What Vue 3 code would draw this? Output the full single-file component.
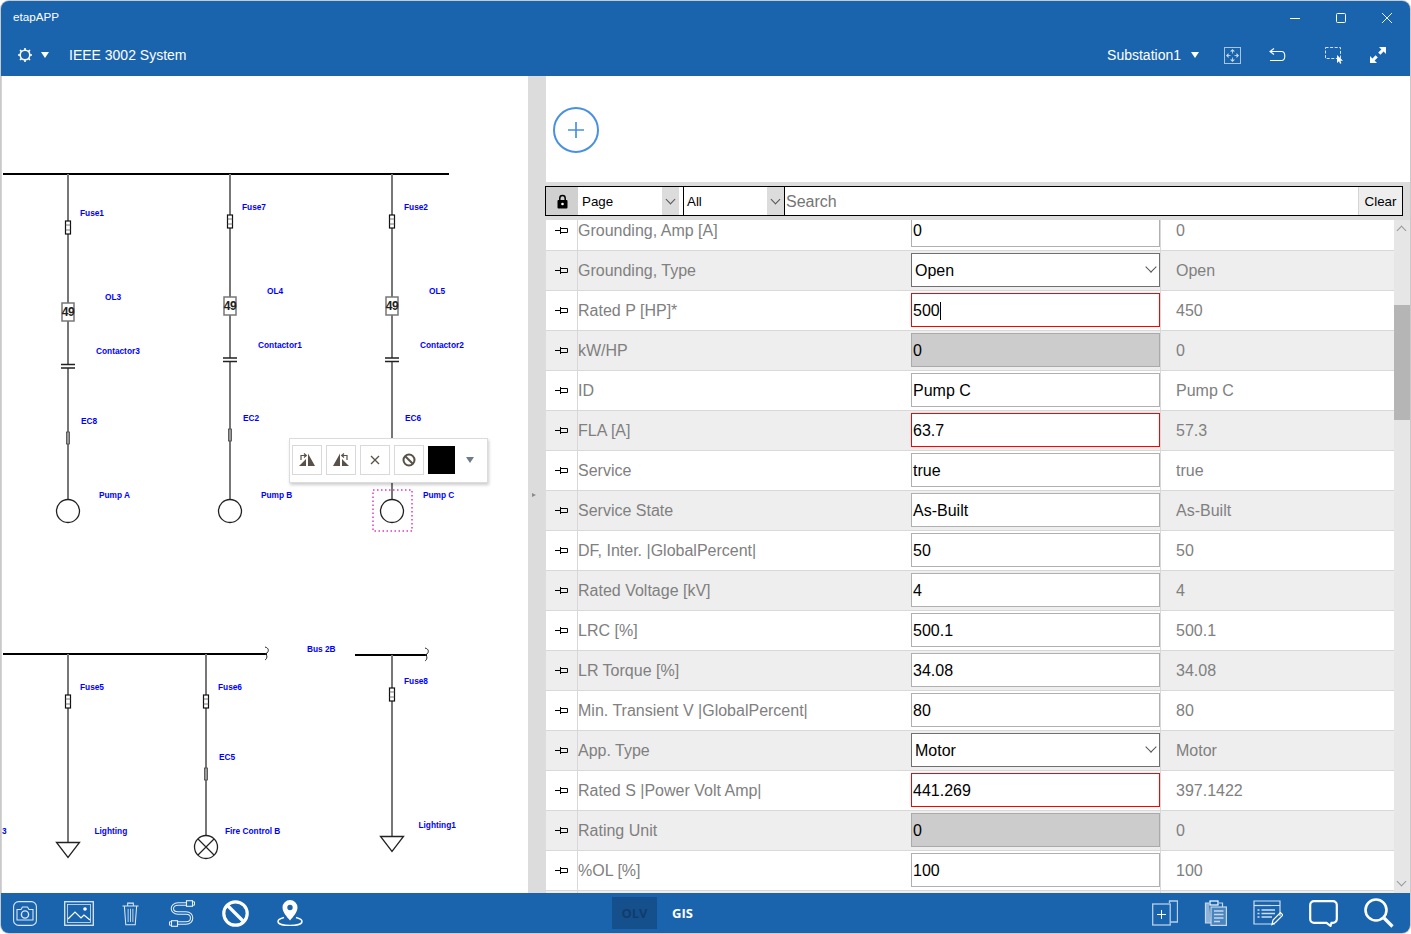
<template>
  <div class="window">
    <header class="topbar">
      <div class="titlebar">
        <span class="app-name">etapAPP</span>
        <div class="win-controls">
          <span class="win-btn">
            <svg width="12" height="12" viewBox="0 0 12 12"><path d="M1 6.5h10" stroke="#fff" fill="none" /></svg>
          </span>
          <span class="win-btn">
            <svg width="12" height="12" viewBox="0 0 12 12"><rect x="1.5" y="1.5" width="9" height="9" rx="1" stroke="#fff" fill="none" /></svg>
          </span>
          <span class="win-btn">
            <svg width="12" height="12" viewBox="0 0 12 12"><path d="M1 1l10 10M11 1L1 11" stroke="#fff" fill="none" stroke-width=".9" /></svg>
          </span>
        </div>
      </div>
      <div class="toolbar">
        <svg class="gear" width="16" height="16" viewBox="0 0 16 16">
          <circle cx="8" cy="8" r="4.8" stroke="#fff" stroke-width="1.6" fill="none" />
          <path d="M8 1v2.2M8 12.8V15M1 8h2.2M12.8 8H15M3 3l1.6 1.6M11.4 11.4L13 13M3 13l1.6-1.6M11.4 4.600L13 3" stroke="#fff" stroke-width="1.6" />
        </svg>
        <span class="caret caret-gear"></span>
        <span class="system-name">IEEE 3002 System</span>
        <span class="substation">Substation1</span>
        <span class="caret caret-sub"></span>
        <svg class="tool-fit" width="17" height="17" viewBox="0 0 17 17" fill="none">
          <rect x=".5" y=".5" width="16" height="16" stroke="#a9c4e0" />
          <path d="M8.5 4v2.500M8.500 10.500V13M4 8.500h2.500M10.500 8.500H13" stroke="#a9c4e0" />
          <path d="M8.500 2l2.500 2.500H6zM8.500 15L11 12.500H6zM2 8.500L4.500 6v5zM15 8.500L12.500 6v5z" fill="#c9dbed" />
        </svg>
        <svg class="tool-undo" width="17" height="16" viewBox="0 0 17 16" fill="none" stroke="#fff" stroke-width="1.1">
          <path d="M5 1.500L1 4.500l4 3" />
          <path d="M1 4.500h11.500c4.400 0 4.400 9 0 9H1" />
        </svg>
        <svg class="tool-select" width="18" height="17" viewBox="0 0 18 17" fill="none">
          <rect x=".5" y=".5" width="15" height="11" stroke="#cfe0f1" stroke-dasharray="3 1.600" />
          <path d="M12 8v8l2-1.800 1 2.600 1.400-.6-1-2.400H18z" fill="#fff" />
        </svg>
        <svg class="tool-expand" width="16" height="16" viewBox="0 0 16 16" fill="#fff">
          <path d="M9 0h7v7l-2.400-2.400-3.200 3.200-2.200-2.200 3.200-3.200zM7 16H0V9l2.400 2.400 3.200-3.200 2.200 2.200-3.200 3.200z" />
        </svg>
      </div>
    </header>

    <main class="content">
      <section class="diagram">
        <svg class="oneline" width="526" height="817" viewBox="2 76 526 817">
          <!-- buses -->
          <path d="M3 174h446M3 654h264M355 655h72" stroke="#000" stroke-width="2.2" fill="none" />
          <path d="M265 647c4 1 4 4 2 6l-2 1c3 1 2 5 0 6M425 648c4 1 4 4 2 6l-2 1c3 1 2 5 0 6" stroke="#222" fill="none" />

          <!-- feeders -->
          <path v-for="l in feeders" :key="l" :d="l" stroke="#777" stroke-width="2" fill="none" />

          <g v-for="f in fuses" :key="f.x + '-' + f.y">
            <rect :x="f.x - 2.5" :y="f.y - 7" width="5" height="13" fill="#fff" stroke="#111" stroke-width="1.2" />
            <path :d="`M${f.x - 2.5} ${f.y - 3}h5M${f.x - 2.5} ${f.y + 2}h5`" stroke="#555" stroke-width=".8" />
          </g>

          <g v-for="b in relays" :key="b.x">
            <rect :x="b.x - 6" :y="b.y - 9" width="12" height="18" fill="#fff" stroke="#777" stroke-width="1.5" />
            <text :x="b.x" :y="b.y + 4" class="relay-text" text-anchor="middle">49</text>
          </g>

          <g v-for="c in contactors" :key="c.x">
            <rect :x="c.x - 7" :y="c.y" width="14" height="3.5" fill="#fff" />
            <path :d="`M${c.x - 7} ${c.y}h14M${c.x - 7} ${c.y + 3.5}h14`" stroke="#222" stroke-width="1.3" />
          </g>

          <rect v-for="e in breakers" :key="e.x + e.y" :x="e.x - 1.5" :y="e.y - 6" width="3" height="12" fill="#999" stroke="#444" stroke-width=".8" />

          <!-- loads -->
          <circle v-for="m in motors" :key="m" :cx="m" cy="511" r="11.5" fill="#fff" stroke="#222" stroke-width="1.3" />
          <path d="M56.500 842.500h23L68 857.500zM380.500 836.500h23L392 851.500z" fill="#fff" stroke="#222" stroke-width="1.3" />
          <circle cx="206" cy="847" r="11.5" fill="#fff" stroke="#222" stroke-width="1.3" />
          <path d="M198 839l16 16M214 839l-16 16" stroke="#222" stroke-width="1.2" />

          <rect x="373" y="490" width="39" height="41" fill="none" stroke="#d93cb8" stroke-dasharray="1.5 2.5" stroke-width="1.5" />

          <text v-for="t in labels" :key="t.s + t.x" :x="t.x" :y="t.y" class="label">{{ t.s }}</text>
        </svg>

        <div class="popover">
          <button class="pop-btn">
            <svg width="18" height="16" viewBox="0 0 18 16" fill="#5a5048">
              <path d="M10 14V1.500L17 14zM8 14V7L1 14z" />
              <path d="M3 8V3.500h5M6 1.500l2.300 2-2.300 2" fill="none" stroke="#5a5048" stroke-width="1.2" />
            </svg>
          </button>
          <button class="pop-btn">
            <svg width="18" height="16" viewBox="0 0 18 16" fill="#5a5048">
              <path d="M8 14V1.500L1 14zM10 14V7l7 7z" />
              <path d="M15 8V3.500h-5M12 1.500l-2.300 2 2.300 2" fill="none" stroke="#5a5048" stroke-width="1.2" />
            </svg>
          </button>
          <button class="pop-btn">
            <svg width="10" height="10" viewBox="0 0 10 10"><path d="M1 1l8 8M9 1L1 9" stroke="#5a5048" stroke-width="1.3" /></svg>
          </button>
          <button class="pop-btn">
            <svg width="14" height="14" viewBox="0 0 14 14" fill="none" stroke="#5a5048" stroke-width="2">
              <circle cx="7" cy="7" r="5.5" /><path d="M3 3l8 8" />
            </svg>
          </button>
          <span class="swatch"></span>
          <span class="pop-caret"></span>
        </div>
      </section>

      <div class="splitter"><span class="splitter-arrow"></span></div>

      <section class="props">
        <div class="props-top">
          <button class="add-btn">
            <svg width="16" height="16" viewBox="0 0 16 16"><path d="M8 0v16M0 8h16" stroke="#4a90e2" stroke-width="1.7" /></svg>
          </button>
        </div>

        <div class="filter">
          <span class="lock">
            <svg width="11" height="15" viewBox="0 0 11 15">
              <path d="M2.800 7V4.200a2.700 2.700 0 0 1 5.400 0V7" fill="none" stroke="#000" stroke-width="1.5" />
              <rect x=".5" y="6" width="10" height="8.5" rx="1" fill="#000" />
              <circle cx="5.500" cy="10" r="1.3" fill="#fff" />
            </svg>
          </span>
          <div class="filter-select select-page">
            <span>Page</span>
            <span class="filter-arrow"><i class="chevron"></i></span>
          </div>
          <div class="filter-select select-all">
            <span>All</span>
            <span class="filter-arrow"><i class="chevron"></i></span>
          </div>
          <span class="search">Search</span>
          <button class="clear">Clear</button>
        </div>

        <div class="table-wrap">
          <div class="rows">
            <div v-for="(row, i) in rows" :key="i" class="row" :class="{ alt: i % 2 === 1 }">
              <span class="pin-cell">
                <svg v-if="row.label" width="13" height="9" viewBox="0 0 13 9" fill="none" stroke="#000">
                  <path d="M0 4.500h6M5.500 1v7" />
                  <path d="M6 2.500h6.500v4H6" />
                </svg>
              </span>
              <span class="label-cell">{{ row.label }}</span>
              <span class="field-cell">
                <span v-if="row.label" class="field" :class="row.kind">
                  {{ row.value }}<i v-if="row.focus" class="text-caret"></i>
                  <i v-if="row.kind === 'select'" class="chevron field-chevron"></i>
                </span>
              </span>
              <span class="value-cell">{{ row.base }}</span>
            </div>
          </div>
          <div class="scrollbar">
            <i class="chevron chevron-up"></i>
            <span class="thumb"></span>
            <i class="chevron chevron-down"></i>
          </div>
        </div>
      </section>
    </main>

    <footer class="bottombar">
      <div class="bottom-left">
        <svg width="24" height="25" viewBox="0 0 24 25" fill="none" stroke="#dbe7f3" stroke-width="1.1">
          <rect x=".6" y=".6" width="22.8" height="23.8" rx="5" />
          <path d="M4 8.500h4l1.500-2.500h5L16 8.500h4v10.500H4z" />
          <circle cx="12" cy="13.500" r="3.6" stroke-width="1.4" />
        </svg>
        <svg class="ic-picture" width="30" height="25" viewBox="0 0 30 25" fill="none" stroke="#dbe7f3" stroke-width="1.3">
          <rect x=".7" y=".7" width="28.6" height="23.6" />
          <rect x="3.500" y="3.500" width="23" height="18" stroke-width=".8" />
          <path d="M4 18l7-7 6 6 3-3 6 5" stroke="#fff" stroke-width="1.2" />
          <circle cx="21" cy="8" r="1.8" fill="#fff" stroke="none" />
        </svg>
        <svg width="17" height="25" viewBox="0 0 18 25" fill="none" stroke="#dbe7f3" stroke-width="1.1">
          <path d="M.5 4.500h17M6 4.500V1.500h6v3" />
          <path d="M2.500 4.500l1.500 20h10l1.500-20" />
          <path d="M6.500 7.500v14M9 7.500v14M11.500 7.500v14" stroke-width=".9" />
        </svg>
        <svg class="ic-cable" width="26" height="27" viewBox="0 0 26 27" fill="none">
          <path d="M17 4H9C1.500 4 1.500 13 9 13h8c7.500 0 7.500 10 0 10H9" stroke="#e6eef7" stroke-width="3.4" />
          <path d="M17 4H9C1.500 4 1.500 13 9 13h8c7.500 0 7.500 10 0 10H9" stroke="#1a64ae" stroke-width="1.3" />
          <rect x="17.500" y=".7" width="6" height="5.6" fill="#1a64ae" stroke="#e6eef7" stroke-width="1.1" />
          <path d="M24 1.800h1.500v3.400H24" stroke="#e6eef7" />
          <rect x="2.500" y="20.700" width="6" height="5.600" fill="#1a64ae" stroke="#e6eef7" stroke-width="1.1" />
          <path d="M2 21.800H.5v3.400H2" stroke="#e6eef7" />
        </svg>
        <svg class="ic-no" width="27" height="27" viewBox="0 0 27 27" fill="none" stroke="#fff" stroke-width="3.2">
          <circle cx="13.500" cy="13.500" r="11.7" /><path d="M5.500 5.500l16 16" />
        </svg>
        <svg width="26" height="26" viewBox="0 0 26 26" fill="#fff">
          <path fill-rule="evenodd" d="M13 0a7.500 7.500 0 0 1 7.500 7.500C20.500 12 16 17 13 20.500 10 17 5.500 12 5.500 7.500A7.500 7.500 0 0 1 13 0zm0 4.800a2.700 2.700 0 1 0 0 5.400 2.700 2.700 0 0 0 0-5.400z" />
          <path d="M7 17.500C3 18.500 1 19.800 1 21.500c0 2.500 5.500 4 12 4s12-1.500 12-4c0-1.700-2-3-6-4" fill="none" stroke="#fff" stroke-width="1.5" />
        </svg>
      </div>

      <div class="modes">
        <span class="mode active">OLV</span>
        <span class="mode">GIS</span>
      </div>

      <div class="bottom-right">
        <svg width="26" height="26" viewBox="0 0 26 26" fill="none" stroke="#b7cfe8" stroke-width="1.3">
          <path d="M17.500 3V1h8v21h-7" />
          <rect x=".7" y="4" width="17.5" height="21" />
          <path d="M9.500 10v9M5 14.500h9" stroke="#fff" stroke-width="1" />
        </svg>
        <svg width="23" height="26" viewBox="0 0 23 26" fill="none" stroke="#c4d8ec" stroke-width="1.2">
          <path d="M5 3H1.500v20H7" fill="#8fb2d6" />
          <path d="M15 3h3.500v4" />
          <rect x="6" y="1" width="8" height="4" stroke="#fff" />
          <rect x="7" y="7" width="15.4" height="18.4" fill="#4a84bf" />
          <path d="M10 11h9.500M10 14.500h9.500M10 18h9.500M10 21.500h6" stroke-width="1.5" />
        </svg>
        <svg width="30" height="27" viewBox="0 0 30 27" fill="none" stroke="#cfdfef" stroke-width="1.2">
          <path d="M22 24H1V1h26v15" />
          <path d="M1 5.500h26" />
          <path d="M4.500 10h2M8.500 10H22M4.500 13.500h2M8.500 13.500H22M4.500 17h2M8.500 17H19" stroke-width="1.4" />
          <path d="M19 24.500l1-4.500 7.500-7.500 2.500 2.500-7.500 7.500z" stroke="#fff" />
        </svg>
        <svg width="29" height="27" viewBox="0 0 29 27" fill="none" stroke="#fff" stroke-width="2.2">
          <path d="M5 1.200h19a3.800 3.800 0 0 1 3.800 3.800v14a3.800 3.800 0 0 1-3.800 3.800h-1.500l-1 3-4-3H5A3.800 3.800 0 0 1 1.200 19V5A3.800 3.800 0 0 1 5 1.200z" />
        </svg>
        <svg width="30" height="30" viewBox="0 0 30 30" fill="none" stroke="#fff">
          <circle cx="12" cy="12" r="10.5" stroke-width="2.6" />
          <path d="M20 20l8.500 8.500" stroke-width="3.2" />
        </svg>
      </div>
    </footer>
  </div>
</template>

<script setup>
const feeders = [
  'M68 174V499', 'M230 174V499', 'M392 174V499',
  'M68 654V842', 'M206 654V835', 'M392 655V836'
]

const fuses = [
  { x: 68, y: 228 }, { x: 230, y: 222 }, { x: 392, y: 222 },
  { x: 68, y: 702 }, { x: 206, y: 702 }, { x: 392, y: 695 }
]

const relays = [{ x: 68, y: 312 }, { x: 230, y: 306 }, { x: 392, y: 306 }]
const contactors = [{ x: 68, y: 364.5 }, { x: 230, y: 358 }, { x: 392, y: 358 }]
const breakers = [{ x: 68, y: 438 }, { x: 230, y: 435 }, { x: 206, y: 774 }]
const motors = [68, 230, 392]

const labels = [
  { s: 'Fuse1', x: 80, y: 216 }, { s: 'OL3', x: 105, y: 300 },
  { s: 'Contactor3', x: 96, y: 354 }, { s: 'EC8', x: 81, y: 424 },
  { s: 'Pump A', x: 99, y: 498 },
  { s: 'Fuse7', x: 242, y: 210 }, { s: 'OL4', x: 267, y: 294 },
  { s: 'Contactor1', x: 258, y: 348 }, { s: 'EC2', x: 243, y: 421 },
  { s: 'Pump B', x: 261, y: 498 },
  { s: 'Fuse2', x: 404, y: 210 }, { s: 'OL5', x: 429, y: 294 },
  { s: 'Contactor2', x: 420, y: 348 }, { s: 'EC6', x: 405, y: 421 },
  { s: 'Pump C', x: 423, y: 498 },
  { s: 'Bus 2B', x: 307, y: 652 },
  { s: 'Fuse5', x: 80, y: 690 }, { s: 'Fuse6', x: 218, y: 690 },
  { s: 'Fuse8', x: 404, y: 684 }, { s: 'EC5', x: 219, y: 760 },
  { s: '3', x: 2, y: 834 }, { s: 'Lighting', x: 94.5, y: 834 },
  { s: 'Fire Control B', x: 225, y: 834 }, { s: 'Lighting1', x: 418.5, y: 828 }
]

const rows = [
  { label: 'Grounding, Amp [A]', value: '0', base: '0' },
  { label: 'Grounding, Type', value: 'Open', base: 'Open', kind: 'select' },
  { label: 'Rated P [HP]*', value: '500', base: '450', kind: 'changed', focus: true },
  { label: 'kW/HP', value: '0', base: '0', kind: 'disabled' },
  { label: 'ID', value: 'Pump C', base: 'Pump C' },
  { label: 'FLA [A]', value: '63.7', base: '57.3', kind: 'changed' },
  { label: 'Service', value: 'true', base: 'true' },
  { label: 'Service State', value: 'As-Built', base: 'As-Built' },
  { label: 'DF, Inter. |GlobalPercent|', value: '50', base: '50' },
  { label: 'Rated Voltage [kV]', value: '4', base: '4' },
  { label: 'LRC [%]', value: '500.1', base: '500.1' },
  { label: 'LR Torque [%]', value: '34.08', base: '34.08' },
  { label: 'Min. Transient V |GlobalPercent|', value: '80', base: '80' },
  { label: 'App. Type', value: 'Motor', base: 'Motor', kind: 'select' },
  { label: 'Rated S |Power Volt Amp|', value: '441.269', base: '397.1422', kind: 'changed' },
  { label: 'Rating Unit', value: '0', base: '0', kind: 'disabled' },
  { label: '%OL [%]', value: '100', base: '100' },
  { label: '', value: '', base: '' }
]
</script>

<style>
html, body {
  margin: 0;
  background: #fff;
}
</style>

<style scoped>
.window {
  width: 1411px;
  height: 934px;
  box-sizing: border-box;
  padding: 1px;
  background: #c9c9c9;
  border-radius: 9px;
  overflow: hidden;
  display: flex;
  flex-direction: column;
  font-family: "Liberation Sans", Arial, sans-serif;
}

.topbar {
  height: 75px;
  background: #1a64ae;
  color: #fff;
  border-radius: 8px 8px 0 0;
}

.titlebar {
  height: 33px;
  display: flex;
  align-items: center;
  justify-content: space-between;
}

.app-name {
  margin-left: 12px;
  margin-bottom: 2px;
  font-size: 11.7px;
}

.win-controls {
  display: flex;
}

.win-btn {
  width: 46px;
  height: 33px;
  display: flex;
  align-items: center;
  justify-content: center;
}

.toolbar {
  height: 42px;
  display: flex;
  align-items: center;
  padding: 0 24px 0 16px;
}

.caret {
  width: 0;
  height: 0;
  border-left: 4.5px solid transparent;
  border-right: 4.5px solid transparent;
  border-top: 6px solid #fff;
}

.caret-gear {
  margin-left: 8px;
}

.system-name {
  margin-left: 20px;
  font-size: 14px;
}

.substation {
  margin-left: auto;
  font-size: 14px;
}

.caret-sub {
  margin-left: 10px;
}

.tool-fit {
  margin-left: 25px;
}

.tool-undo {
  margin-left: 28px;
}

.tool-select {
  margin-left: 39px;
}

.tool-expand {
  margin-left: 27px;
}

.content {
  flex: 1;
  min-height: 0;
  display: flex;
}

.diagram {
  position: relative;
  width: 527px;
  box-sizing: border-box;
  border-left: 1px solid #d4d4d4;
  background: #fff;
  overflow: hidden;
}

.oneline {
  display: block;
}

.label {
  font-size: 8.3px;
  font-weight: 700;
  fill: #0000ff;
  font-family: "Liberation Sans", Arial, sans-serif;
}

.relay-text {
  font-size: 12px;
  font-weight: 700;
  letter-spacing: -0.5px;
  fill: #222;
  font-family: "Liberation Sans", Arial, sans-serif;
}

.popover {
  position: absolute;
  left: 287px;
  top: 362px;
  width: 199px;
  height: 45px;
  box-sizing: border-box;
  background: #fff;
  border: 1px solid #dcdcdc;
  box-shadow: 1px 2px 3px rgba(0, 0, 0, 0.2);
  display: flex;
  align-items: center;
  padding: 0 0 2px 2px;
  gap: 4px;
}

.pop-btn {
  width: 30px;
  height: 30px;
  padding: 0;
  background: #fff;
  border: 1px solid #d9d9d9;
  display: flex;
  align-items: center;
  justify-content: center;
}

.swatch {
  width: 27px;
  height: 28px;
  background: #000;
}

.pop-caret {
  margin-left: 7px;
  width: 0;
  height: 0;
  border-left: 4.5px solid transparent;
  border-right: 4.5px solid transparent;
  border-top: 6px solid #6f7b88;
}

.splitter {
  width: 18px;
  background: #dcdcdc;
  display: flex;
  justify-content: center;
  padding-top: 417px;
  box-sizing: border-box;
}

.splitter-arrow {
  width: 0;
  height: 0;
  margin-right: 6px;
  border-top: 2.5px solid transparent;
  border-bottom: 2.5px solid transparent;
  border-left: 4px solid #8a8a8a;
}

.props {
  flex: 1;
  min-width: 0;
  display: flex;
  flex-direction: column;
  background: #dcdcdc;
}

.props-top {
  height: 106px;
  box-sizing: border-box;
  background: #fff;
  padding: 31px 0 0 7px;
}

.add-btn {
  width: 46px;
  height: 46px;
  padding: 0;
  border: 2px solid #4a90e2;
  border-radius: 50%;
  background: #fff;
  display: flex;
  align-items: center;
  justify-content: center;
}

.filter {
  width: 858px;
  height: 30px;
  box-sizing: border-box;
  margin: 4px 0 4px -1px;
  border: 1px solid #000;
  background: #fff;
  display: flex;
  align-items: stretch;
}

.lock {
  width: 32px;
  background: #d0d0d0;
  display: flex;
  align-items: center;
  justify-content: center;
}

.filter-select {
  display: flex;
  align-items: center;
  justify-content: space-between;
  box-sizing: border-box;
  border-right: 1px solid #000;
  font-size: 13.33px;
}

.select-page {
  width: 106px;
  padding-left: 4px;
  padding-right: 4px;
}

.select-all {
  width: 101px;
  padding-left: 3px;
}

.filter-arrow {
  width: 17px;
  align-self: stretch;
  background: #dcdcdc;
  display: flex;
  align-items: center;
  justify-content: center;
}

.chevron {
  display: block;
  width: 7px;
  height: 7px;
  box-sizing: border-box;
  border-right: 1px solid #555;
  border-bottom: 1px solid #555;
  transform: translateY(-2px) rotate(45deg);
}

.search {
  flex: 1;
  padding-left: 1px;
  font-size: 16px;
  color: #757575;
  line-height: 30px;
}

.clear {
  width: 44px;
  padding: 0;
  border: 0;
  border-left: 1px solid #d5d5d5;
  background: #eee;
  color: #000;
  font-family: inherit;
  font-size: 13.33px;
}

.table-wrap {
  flex: 1;
  min-height: 0;
  display: flex;
}

.rows {
  flex: 1;
  min-width: 0;
  overflow: hidden;
}

.row {
  height: 40px;
  box-sizing: border-box;
  border-bottom: 1px solid #d8d8d8;
  background: #fff;
  display: grid;
  grid-template-columns: 32px 333px 250px 1fr;
  align-items: center;
  font-size: 16px;
  color: #808080;
}

.row:first-child {
  margin-top: -9px;
}

.row.alt {
  background: #eee;
}

.pin-cell {
  height: 100%;
  box-sizing: border-box;
  border-right: 1px solid #d8d8d8;
  display: flex;
  align-items: center;
  justify-content: center;
  padding: 0 1px 1px 0;
}

.field-cell {
  height: 100%;
  box-sizing: border-box;
  border-right: 1px solid #d8d8d8;
  padding-top: 2px;
}

.field {
  position: relative;
  width: 249px;
  height: 34px;
  box-sizing: border-box;
  padding: 1px 0 0 1px;
  border: 1px solid #b0b0b0;
  background: #fff;
  color: #000;
  display: flex;
  align-items: center;
}

.field.select {
  border-color: #707070;
  padding-left: 3px;
}

.field.changed {
  border-color: #f00;
}

.field.disabled {
  background: #ccc;
  border-color: #aaa;
}

.text-caret {
  display: inline-block;
  width: 1px;
  height: 18px;
  background: #000;
}

.field-chevron {
  position: absolute;
  right: 4px;
  top: 11px;
  width: 8px;
  height: 8px;
}

.value-cell {
  padding-left: 15px;
}

.scrollbar {
  position: relative;
  width: 16px;
  background: #e6e6e6;
  overflow: hidden;
}

.thumb {
  display: block;
  height: 115px;
  margin-top: 85px;
  background: #b5b5b5;
}

.chevron-up {
  position: absolute;
  left: 4px;
  top: 7px;
  border-color: #999;
  transform: rotate(225deg);
}

.chevron-down {
  position: absolute;
  left: 4px;
  bottom: 6px;
  border-color: #999;
}

.bottombar {
  height: 40px;
  background: #1a64ae;
  border-radius: 0 0 8px 8px;
  display: flex;
  align-items: center;
}

.bottom-left {
  display: flex;
  align-items: center;
  gap: 28px;
  margin-left: 12px;
}

.ic-picture {
  margin-left: -1px;
}

.ic-cable {
  margin-left: 2px;
}

.ic-no {
  margin-left: -1px;
}

.modes {
  display: flex;
  align-items: center;
  margin-left: 309px;
}

.mode {
  width: 45px;
  height: 32px;
  display: flex;
  align-items: center;
  justify-content: center;
  font-family: "Open Sans", sans-serif;
  font-size: 13px;
  font-weight: 700;
  color: #fff;
  margin-right: 7px;
}

.mode.active {
  background: #16508c;
  color: #0f3d6e;
  margin-right: 3px;
}

.bottom-right {
  display: flex;
  align-items: center;
  gap: 26px;
  margin-left: auto;
  margin-right: 16px;
}
</style>
